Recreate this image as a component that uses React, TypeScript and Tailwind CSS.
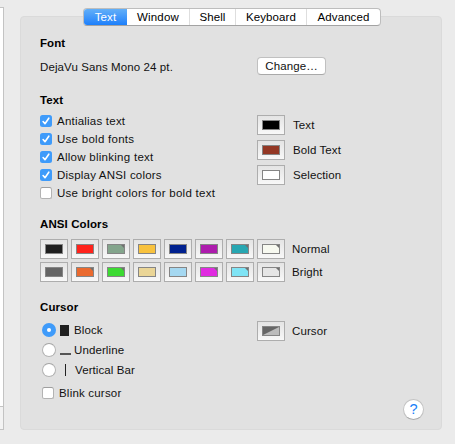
import React from "react";

const tabs = [
  { label: "Text", size: "w-[43px]" },
  { label: "Window", size: "w-[62px] tracking-[0.2px]" },
  { label: "Shell", size: "w-[46px]" },
  { label: "Keyboard", size: "w-[71px]" },
  { label: "Advanced", size: "w-[74px]" },
];

const options = [
  { label: "Antialias text", on: true, spacing: "tracking-[0.22px]" },
  { label: "Use bold fonts", on: true, spacing: "tracking-[0.27px]" },
  { label: "Allow blinking text", on: true, spacing: "tracking-[0.27px]" },
  { label: "Display ANSI colors", on: true, spacing: "tracking-[0.2px]" },
  { label: "Use bright colors for bold text", on: false, spacing: "tracking-[0.28px]" },
];

type Color = { fill: string; alpha?: boolean };

const normal: Color[] = [
  { fill: "bg-[#1f1f1f]" },
  { fill: "bg-[#ff231c]" },
  { fill: "bg-[#84a58c]", alpha: true },
  { fill: "bg-[#f8c23e]" },
  { fill: "bg-[#00218f]" },
  { fill: "bg-[#ad1cad]" },
  { fill: "bg-[#28a7b2]", alpha: true },
  { fill: "bg-[#f7f9f0]", alpha: true },
];

const bright: Color[] = [
  { fill: "bg-[#656565]" },
  { fill: "bg-[#ea6a2f]", alpha: true },
  { fill: "bg-[#3cda32]", alpha: true },
  { fill: "bg-[#ead596]" },
  { fill: "bg-[#a5d8f1]" },
  { fill: "bg-[#e02be0]", alpha: true },
  { fill: "bg-[#7fe4f5]", alpha: true },
  { fill: "bg-[#e5e5e5]", alpha: true },
];

function Swatch({ fill, alpha }: Color) {
  return (
    <div className="flex h-5 w-7 shrink-0 items-center justify-center border border-[#adadad] bg-linear-to-b from-[#e4e4e4] to-[#f8f8f8]">
      <div className={`flex h-2.5 w-[18px] justify-end border border-[#858585] ${fill}`}>
        {alpha && (
          <svg className="h-[3px] w-[3px]" viewBox="0 0 3 3">
            <path d="M0 0h3v3z" fill="#6f6f6f" />
          </svg>
        )}
      </div>
    </div>
  );
}

function Checkbox({ on }: { on: boolean }) {
  return on ? (
    <span className="flex h-3 w-3 shrink-0 items-center justify-center rounded-[2.5px] bg-[#3f9bfa]">
      <svg className="h-3 w-3" viewBox="0 0 12 12" fill="none">
        <path d="M3.1 6.5 5 8.7 8.8 3.2" stroke="#fff" strokeWidth="1.6" strokeLinecap="round" strokeLinejoin="round" />
      </svg>
    </span>
  ) : (
    <span className="h-3 w-3 shrink-0 rounded-[2.5px] border border-[#b3b3b3] border-t-[#9f9f9f] bg-white" />
  );
}

function Radio({ on }: { on?: boolean }) {
  return on ? (
    <span className="flex h-3.5 w-3.5 items-center justify-center rounded-full bg-[#3f9bfa]">
      <span className="h-1 w-1 rounded-full bg-white" />
    </span>
  ) : (
    <span className="h-3.5 w-3.5 rounded-full border border-[#b3b3b3] border-t-[#a3a3a3] bg-white" />
  );
}

function Heading({ children }: { children: React.ReactNode }) {
  return <h2 className="h-4 text-[11.5px] leading-4 font-bold tracking-[0.1px] text-black">{children}</h2>;
}

export default function App() {
  return (
    <div className="flex h-[444px] w-[455px] overflow-hidden bg-[#ebebeb] font-['Liberation_Sans',Arial,sans-serif] text-[11.5px] leading-4 tracking-[0.1px] whitespace-nowrap text-[#111]">
      <div className="mt-[7px] h-[423px] w-1 shrink-0 border-y border-r border-[#c3c3c3] bg-[#f3f3f3]">
        <div className="h-[399px] border-b border-[#c3c3c3] bg-white" />
      </div>
      <main className="ml-4 w-[422px] pt-2">
        <nav className="relative z-10 ml-[63px] flex h-[18px] w-[298px] overflow-hidden rounded-[4px] border border-[#bdbdbd] border-b-[#a3a3a3] bg-white">
          {tabs.map((tab, i) => (
            <button
              key={tab.label}
              className={`flex shrink-0 items-center justify-center ${tab.size} ${
                i === 0 ? "bg-linear-to-b from-[#62aff8] to-[#1b7ffb] text-white" : i > 1 ? "border-l border-[#dedede] text-black" : "text-black"
              }`}
            >
              {tab.label}
            </button>
          ))}
        </nav>
        <section className="-mt-2.5 flex h-[414px] flex-col rounded-[4px] border border-[#dadada] bg-[#e1e1e1] pt-[18px] pl-[19px]">
          <Heading>Font</Heading>
          <div className="mt-1.5 flex h-[18px] items-center">
            <span className="w-[217px] pt-0.5">DejaVu Sans Mono 24 pt.</span>
            <button className="h-[18px] w-[69px] rounded-[4px] border border-[#c0c0c0] border-b-[#a9a9a9] bg-white leading-[15px]">Change…</button>
          </div>

          <div className="mt-[17px]">
            <Heading>Text</Heading>
          </div>
          <div className="mt-[7px] flex h-[90px]">
            <div className="-mt-[3px] w-[217px]">
              {options.map((o) => (
                <label key={o.label} className={`flex h-[18px] items-center gap-[5px] ${o.spacing}`}>
                  <Checkbox on={o.on} />
                  {o.label}
                </label>
              ))}
            </div>
            <div className="flex flex-col gap-[5px]">
              <div className="flex items-center gap-2"><Swatch fill="bg-black" />Text</div>
              <div className="flex items-center gap-2"><Swatch fill="bg-[#933724]" />Bold Text</div>
              <div className="flex items-center gap-2"><Swatch fill="bg-white" />Selection</div>
            </div>
          </div>

          <div className="mt-[11px]">
            <Heading>ANSI Colors</Heading>
          </div>
          <div className="mt-[7px] flex flex-col gap-[3px]">
            <div className="flex items-center gap-[3px]">
              {normal.map((c) => <Swatch key={c.fill} {...c} />)}
              <span className="ml-1">Normal</span>
            </div>
            <div className="flex items-center gap-[3px]">
              {bright.map((c) => <Swatch key={c.fill} {...c} />)}
              <span className="ml-1">Bright</span>
            </div>
          </div>

          <div className="mt-[17px]">
            <Heading>Cursor</Heading>
          </div>
          <div className="mt-[5px] flex">
            <div className="w-[217px] pl-0.5">
              <label className="flex h-5 items-center">
                <Radio on />
                <span className="mr-[5px] ml-1 h-[11px] w-[9px] bg-[#202020]" />
                Block
              </label>
              <label className="flex h-5 items-center">
                <Radio />
                <span className="mt-2 mr-[3px] ml-1 h-[2px] w-[11px] bg-[#555]" />
                Underline
              </label>
              <label className="flex h-5 items-center">
                <Radio />
                <span className="mr-[9px] ml-[9px] h-3 w-px bg-[#222]" />
                Vertical Bar
              </label>
              <label className="mt-1 flex h-[18px] items-center gap-[5px] tracking-[0.2px]">
                <Checkbox on={false} />
                Blink cursor
              </label>
            </div>
            <div className="mt-px flex h-5 items-center gap-[7px]">
              <div className="flex h-5 w-7 items-center justify-center border border-[#adadad] bg-linear-to-b from-[#e4e4e4] to-[#f8f8f8]">
                <svg className="h-2.5 w-[18px] border border-[#858585] bg-[#bcbcbc]" viewBox="0 0 16 8" preserveAspectRatio="none">
                  <path d="M0 0h16L0 8z" fill="#666" />
                </svg>
              </div>
              Cursor
            </div>
          </div>
          <button className="-mt-[3px] mr-[17px] flex h-[21px] w-[21px] shrink-0 items-center justify-center self-end rounded-full border border-[#c2c2c2] border-b-[#a8a8a8] bg-white text-[14.5px] leading-none tracking-normal text-[#1a80f8]">
            ?
          </button>
        </section>
      </main>
    </div>
  );
}
